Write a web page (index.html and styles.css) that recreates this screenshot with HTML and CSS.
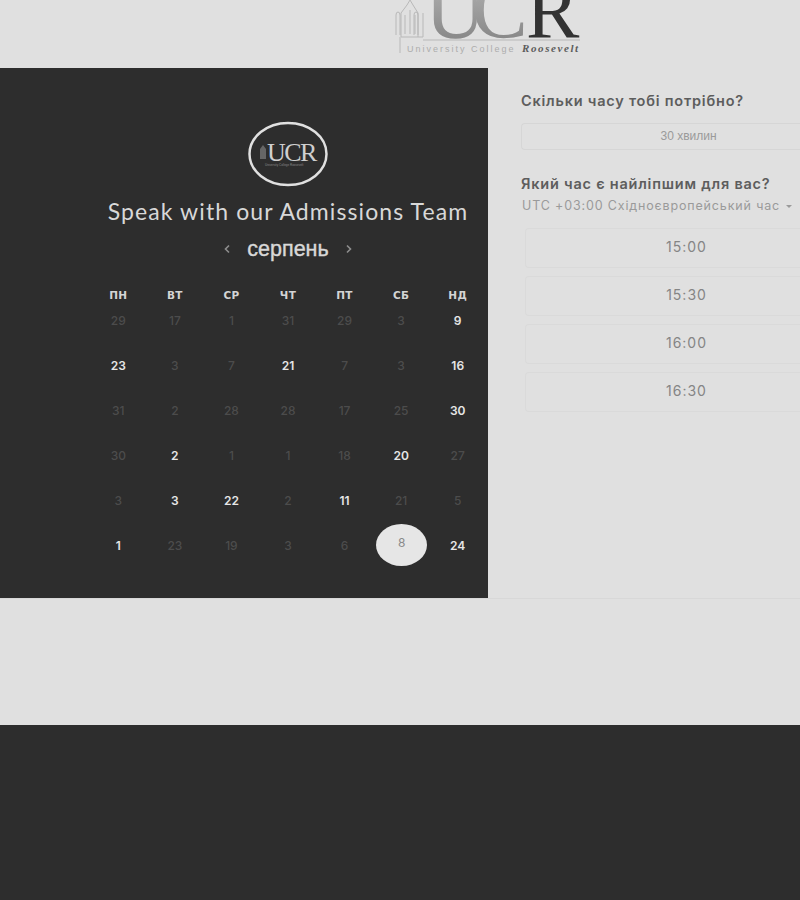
FILE: index.html
```html
<!DOCTYPE html>
<html lang="uk">
<head>
<meta charset="utf-8">
<title>Speak with our Admissions Team</title>
<link rel="stylesheet" href="styles.css">
</head>
<body>
<header class="top">
  <svg class="logo" width="190" height="56" viewBox="0 0 190 56" aria-label="UCR logo">
    <defs>
      <linearGradient id="ucgrad" x1="0" x2="0" y1="0" y2="1">
        <stop offset="0" stop-color="#bdbdbd"/>
        <stop offset="1" stop-color="#7d7d7d"/>
      </linearGradient>
    </defs>
    <g fill="none" stroke="#b8b8b8" stroke-width="1">
      <path d="M7 53V37M30 40H187"/>
      <path d="M3 35V15q0-3 2-3t2 3v20M8 37V13l6-8 3-5 3 5 5 8v24M21 35V15q0-3 2-3t2 3v20"/>
      <path d="M12 34V15M17 34V10M22 34V15M8 37H30V13"/>
    </g>
    <text class="logo-uc" x="32" y="38" fill="url(#ucgrad)">UC</text>
    <text class="logo-r" x="133" y="38" fill="#333">R</text>
    <text class="logo-sub" x="14" y="52">University College</text>
    <text class="logo-rs" x="129" y="52">Roosevelt</text>
  </svg>
</header>
<main class="booking">
  <section class="panel">
    <svg class="badge" width="82" height="68" viewBox="0 0 82 68" aria-label="UCR badge">
      <ellipse cx="41" cy="34" rx="38.500" ry="31" fill="none" stroke="#e0e0e0" stroke-width="2.500"/>
      <path d="M13 39V29l3-4 3 4v10z" fill="#666"/>
      <text class="badge-text" x="20" y="41">UCR</text>
      <text class="badge-sub" x="18" y="46">University College Roosevelt</text>
    </svg>
    <h1 class="title">Speak with our Admissions Team</h1>
    <div class="month">
      <svg class="chev" width="8" height="10" viewBox="0 0 8 10"><path d="M6 1.500 2.500 5 6 8.500" fill="none" stroke="#8e8e8e" stroke-width="1.600"/></svg>
      <span class="month-name">серпень</span>
      <svg class="chev" width="8" height="10" viewBox="0 0 8 10"><path d="M2 1.500 5.500 5 2 8.500" fill="none" stroke="#8e8e8e" stroke-width="1.600"/></svg>
    </div>
    <div class="cal">
      <div class="wd">ПН</div><div class="wd">ВТ</div><div class="wd">СР</div><div class="wd">ЧТ</div><div class="wd">ПТ</div><div class="wd">СБ</div><div class="wd">НД</div>
      <div class="d">29</div><div class="d">17</div><div class="d">1</div><div class="d">31</div><div class="d">29</div><div class="d">3</div><div class="d on">9</div>
      <div class="d on">23</div><div class="d">3</div><div class="d">7</div><div class="d on">21</div><div class="d">7</div><div class="d">3</div><div class="d on">16</div>
      <div class="d">31</div><div class="d">2</div><div class="d">28</div><div class="d">28</div><div class="d">17</div><div class="d">25</div><div class="d on">30</div>
      <div class="d">30</div><div class="d on">2</div><div class="d">1</div><div class="d">1</div><div class="d">18</div><div class="d on">20</div><div class="d">27</div>
      <div class="d">3</div><div class="d on">3</div><div class="d on">22</div><div class="d">2</div><div class="d on">11</div><div class="d">21</div><div class="d">5</div>
      <div class="d on">1</div><div class="d">23</div><div class="d">19</div><div class="d">3</div><div class="d">6</div><div class="d sel"><span class="sel-dot">8</span></div><div class="d on">24</div>
    </div>
  </section>
  <section class="side">
    <h2 class="q">Скільки часу тобі потрібно?</h2>
    <div class="dur">30 хвилин</div>
    <h2 class="q q2">Який час є найліпшим для вас?</h2>
    <div class="tz">UTC +03:00 Східноєвропейський час <span class="caret"></span></div>
    <div class="slots">
      <div class="slot">15:00</div>
      <div class="slot">15:30</div>
      <div class="slot">16:00</div>
      <div class="slot">16:30</div>
    </div>
  </section>
</main>
<div class="gap"></div>
<footer class="foot"></footer>
</body>
</html>
```
FILE: styles.css
```css
* { box-sizing: border-box; }
html, body { margin: 0; padding: 0; }
body {
  width: 800px;
  height: 900px;
  overflow: hidden;
  background: #e0e0e0;
  font-family: "Inter", "Liberation Sans", sans-serif;
}
.top {
  height: 68px;
  padding-left: 393px;
  overflow: hidden;
}
.logo { display: block; }
.logo-uc { font: 84px "Liberation Serif", serif; letter-spacing: -14px; }
.logo-r { font: 80px "Liberation Serif", serif; }
.logo-sub { font: 9px "Liberation Sans", sans-serif; letter-spacing: 2px; fill: #adadad; }
.logo-rs { font: italic bold 11px "Liberation Serif", serif; letter-spacing: 1.600px; fill: #5c5c5c; }
.booking {
  height: 531px;
  display: flex;
  border-bottom: 1px solid #d8d8d8;
}
.panel {
  flex: none;
  width: 488px;
  height: 530px;
  background: #2d2d2d;
  padding: 52px 0 0 88px;
  display: flex;
  flex-direction: column;
  align-items: center;
}
.badge { display: block; flex: none; }
.badge-text { font: 26px "Liberation Serif", serif; letter-spacing: -1.500px; fill: #cfcfcf; }
.badge-sub { font: 3px "Liberation Sans", sans-serif; fill: #8a8a8a; }
.title {
  margin: 10px 0 0;
  font: 400 23px/26px "Lato", sans-serif;
  letter-spacing: 1.100px;
  color: #d8d8d8;
  white-space: nowrap;
}
.month {
  margin-top: 12px;
  display: flex;
  align-items: center;
  gap: 16px;
  height: 26px;
}
.month-name {
  font: 400 21.500px/28px "Liberation Sans", sans-serif;
  -webkit-text-stroke: 0.400px #d8d8d8;
  color: #d8d8d8;
}
.chev { display: block; }
.cal {
  margin-top: 20px;
  width: 396px;
  display: grid;
  grid-template-columns: repeat(7, 1fr);
  grid-auto-rows: 45px;
}
.wd {
  height: 26px;
  text-align: center;
  font: 700 10.500px/26px "DejaVu Sans", sans-serif;
  letter-spacing: 0.300px;
  color: #d4d4d4;
  align-self: start;
}
.d {
  text-align: center;
  font: 500 12px/24px "Inter", sans-serif;
  color: #4c4c4c;
  margin-top: -18px;
}
.d.on { color: #e6e6e6; font-weight: 600; }
.d.sel { position: relative; }
.sel-dot {
  position: absolute;
  left: 50%;
  top: -10px;
  width: 51px;
  height: 42px;
  margin-left: -25px;
  border-radius: 50%;
  background: #e6e6e6;
  color: #8a8a8a;
  font-weight: 400;
  line-height: 38px;
}
.side {
  flex: 1;
  min-width: 0;
  padding: 24px 0 0 33px;
}
.q {
  margin: 0;
  font: 600 14.500px/18px "Inter", sans-serif;
  letter-spacing: 0.780px;
  color: #5d5d5d;
  white-space: nowrap;
}
.dur {
  margin-top: 13px;
  width: 290px;
  height: 27px;
  border: 1px solid #d6d6d6;
  border-right: 0;
  border-radius: 4px 0 0 4px;
  text-align: center;
  padding-left: 44px;
  font: 400 12px/24px "Liberation Sans", sans-serif;
  color: #9a9a9a;
}
.q2 { margin-top: 25px; }
.tz {
  margin-top: 5px;
  padding-left: 1px;
  font: 400 12.500px/16px "Inter", sans-serif;
  letter-spacing: 0.850px;
  color: #9a9a9a;
  white-space: nowrap;
}
.caret {
  display: inline-block;
  margin-left: 2px;
  vertical-align: 2px;
  border: 3.500px solid transparent;
  border-top: 3.500px solid #9a9a9a;
  border-bottom: 0;
}
.slots {
  margin-top: 14px;
  margin-left: 4px;
  display: flex;
  flex-direction: column;
  gap: 8px;
}
.slot {
  width: 290px;
  height: 40px;
  border: 1px solid #dadada;
  border-right: 0;
  border-radius: 4px 0 0 4px;
  text-align: center;
  padding-left: 32px;
  font: 400 14px/35px "Inter", sans-serif;
  letter-spacing: 1px;
  color: #858585;
}
.gap { height: 126px; }
.foot { height: 175px; background: #2d2d2d; }
```
